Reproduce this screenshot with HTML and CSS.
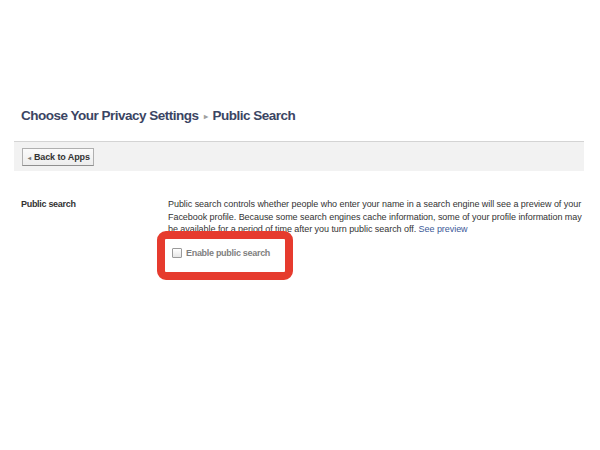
FILE: index.html
```html
<!DOCTYPE html>
<html>
<head>
<meta charset="utf-8">
<link rel="stylesheet" href="styles.css">
</head>
<body>
<div class="page">
  <h1 class="title">Choose Your Privacy Settings <span class="crumb-arrow">&#9656;</span> Public Search</h1>
  <div class="bar">
    <span class="btn"><span class="btn-arrow">&#9666;</span>Back to Apps</span>
  </div>
  <div class="row">
    <div class="label">Public search</div>
    <div class="content">
      <p class="desc">Public search controls whether people who enter your name in a search engine will see a preview of your Facebook profile. Because some search engines cache information, some of your profile information may be available for a period of time after you turn public search off. <a class="link">See preview</a></p>
      <div class="option">
        <span class="check"></span>
        <span class="check-label">Enable public search</span>
      </div>
    </div>
  </div>
</div>
</body>
</html>
```
FILE: styles.css
```css
html, body {
  margin: 0;
  padding: 0;
  background: #ffffff;
}
.page {
  width: 570px;
  min-height: 343px;
  margin-left: 14px;
  padding-top: 107px;
  font-family: "Liberation Sans", Arial, sans-serif;
  color: #333333;
}
.title {
  margin: 0;
  padding-left: 7px;
  font-size: 13.5px;
  line-height: 18px;
  font-weight: bold;
  letter-spacing: -0.5px;
  color: #3b4563;
  white-space: nowrap;
}
.crumb-arrow {
  color: #a0a0a0;
  font-size: 8px;
  vertical-align: 1px;
  margin: 0 2px;
}
.bar {
  margin-top: 15px;
  border-top: 1px solid #d4d4d4;
  background: #f2f2f2;
  height: 30px;
  padding: 6px 0 0 8px;
  box-sizing: border-box;
  display: flex;
  align-items: flex-start;
}
.btn {
  display: flex;
  align-items: center;
  height: 16px;
  padding: 0 3px 0 5px;
  border: 1px solid #b0b0b0;
  border-bottom-color: #8f8f8f;
  background: linear-gradient(#fbfbfb, #ededed);
  font-size: 9px;
  font-weight: bold;
  letter-spacing: -0.1px;
  color: #333;
}
.btn-arrow {
  font-size: 6px;
  color: #777;
  margin-right: 3px;
}
.row {
  display: flex;
  margin-top: 27px;
}
.label {
  width: 154px;
  box-sizing: border-box;
  padding-left: 7px;
  font-size: 9px;
  font-weight: bold;
  letter-spacing: -0.3px;
  color: #333;
  line-height: 12.5px;
}
.content {
  flex: 1;
}
.desc {
  margin: 0;
  font-size: 9px;
  line-height: 12.5px;
  letter-spacing: -0.05px;
  color: #333;
}
.link {
  color: #3b5998;
}
.option {
  position: relative;
  display: flex;
  align-items: center;
  height: 12px;
  margin-top: 11px;
  padding-left: 4px;
}
.option::before {
  content: "";
  position: absolute;
  left: -11px;
  top: -16px;
  width: 136px;
  height: 49px;
  box-sizing: border-box;
  border: 8px solid #e63b2e;
  border-radius: 9px;
}
.check {
  width: 8px;
  height: 8px;
  border: 1px solid #9a9a9a;
  border-radius: 1px;
  background: linear-gradient(#ffffff, #e6e6e6);
  margin-right: 4px;
  flex: none;
}
.check-label {
  font-size: 9px;
  font-weight: bold;
  letter-spacing: -0.3px;
  color: #7f7f7f;
  white-space: nowrap;
}
```
